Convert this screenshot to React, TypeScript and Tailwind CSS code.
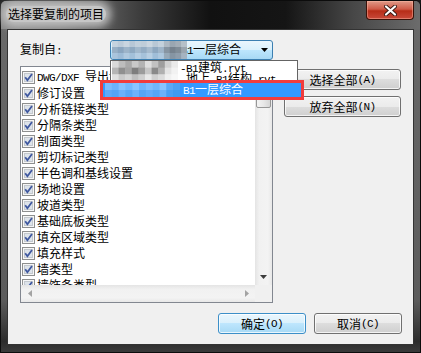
import React from "react";

const items = [
  "DWG/DXF 导出设置",
  "修订设置",
  "分析链接类型",
  "分隔条类型",
  "剖面类型",
  "剪切标记类型",
  "半色调和基线设置",
  "场地设置",
  "坡道类型",
  "基础底板类型",
  "填充区域类型",
  "填充样式",
  "墙类型",
  "墙饰条类型",
];

// pixelated (blurred-out) parts of the file names
const comboBlur = [
  ["#c5d3df", "#bccbd9", "#c9d5e0", "#b7c7d6", "#c2d0dc", "#bfcdd9", "#cbd6e0", "#b9c8d5", "#c4d1dc", "#aeb9c3", "#9aa6b1", "#a3adb6", "#b6c0c8"],
  ["#98b0c6", "#8aa5bf", "#9db4c9", "#8fa9c1", "#a2b8cc", "#94adc4", "#a6bbce", "#8ea8c0", "#9fb5c9", "#8795a2", "#76828e", "#808c97", "#9aa5af"],
  ["#a9c4dc", "#9dbbd6", "#b0c9df", "#a3c0d9", "#b5cde2", "#a6c2da", "#b8cfe3", "#a0bed8", "#aec8de", "#97a9b8", "#8695a3", "#8f9dab", "#a5b3c0"],
];
const listBlur = [
  ["#d9d9d9", "#bdbdbd", "#a9a9a9", "#c8c8c8", "#b3b3b3", "#dedede", "#c1c1c1", "#9e9e9e", "#d2d2d2", "#eaeaea"],
  ["#b5b5b5", "#8f8f8f", "#a3a3a3", "#7e7e7e", "#9b9b9b", "#c6c6c6", "#8a8a8a", "#b0b0b0", "#e4e4e4", "#f2f2f2"],
  ["#e0e0e0", "#c9c9c9", "#d4d4d4", "#bfbfbf", "#cfcfcf", "#e8e8e8", "#d0d0d0", "#dcdcdc", "#f0f0f0", "#f7f7f7"],
];
const selBlur = [
  ["#7cbcfd", "#6db3fb", "#86c2ff", "#74b8fc", "#8ac4ff", "#6fb5fb", "#80bffe", "#72b7fc", "#88c3ff", "#5da9f6", "#4ea1f3"],
  ["#5ea9f6", "#54a4f5", "#69b0fa", "#58a6f5", "#6cb2fb", "#57a5f4", "#62abf8", "#55a5f5", "#6bb1fa", "#4a9ff3", "#409af1"],
];

function Mosaic({ w, h, grid }: { w: number; h: number; grid: string[][] }) {
  const cw = w / grid[0].length;
  const ch = h / grid.length;
  return (
    <svg width={w} height={h} className="blur-[0.4px]">
      {grid.map((row, r) =>
        row.map((c, i) => <rect key={r + "-" + i} x={i * cw} y={r * ch} width={cw + 0.5} height={ch + 0.5} fill={c} />)
      )}
    </svg>
  );
}

// latin runs in a narrow mono face, CJK in Noto
function Txt({ s }: { s: string }) {
  const parts = s.split(/([\x20-\x7e]+)/);
  return (
    <>
      {parts.map((p, i) =>
        !p ? null : /[\x20-\x7e]/.test(p) ? (
          <span key={i} className="font-['Liberation_Mono',monospace] text-[11px] tracking-[-0.6px]">
            {p}
          </span>
        ) : (
          <span key={i}>{p}</span>
        )
      )}
    </>
  );
}

function CheckBox() {
  return (
    <svg width="13" height="13" viewBox="0 0 13 13" className="shrink-0">
      <rect x="0.5" y="0.5" width="12" height="12" fill="#f6f6f6" stroke="#8e8f8f" />
      <rect x="2.5" y="2.5" width="8" height="8" fill="#dde3ea" stroke="#c3c8ce" />
      <path d="M3.2 6.2 L5.4 9.2 L10 3" fill="none" stroke="#3f58a0" strokeWidth="1.8" />
    </svg>
  );
}

function Arrow({ dir, color }: { dir: "down" | "left" | "right"; color: string }) {
  if (dir === "down")
    return (
      <svg width="7" height="4" viewBox="0 0 7 4">
        <path d="M0 0 H7 L3.5 4 Z" fill={color} />
      </svg>
    );
  return (
    <svg width="4" height="7" viewBox="0 0 4 7">
      <path d={dir === "left" ? "M4 0 V7 L0 3.5 Z" : "M0 0 V7 L4 3.5 Z"} fill={color} />
    </svg>
  );
}

function WinButton({ label, w, isDefault }: { label: string; w: string; isDefault?: boolean }) {
  return (
    <div
      className={`flex h-[21px] ${w} items-center justify-center rounded-[3px] border shadow-[inset_0_0_0_1px_rgba(255,255,255,0.75)] ${
        isDefault
          ? "border-[#3c8fc8] bg-[linear-gradient(to_bottom,#eaf6fd_0%,#d9f0fc_50%,#bee6fd_50%,#a7d9f5_100%)]"
          : "border-[#707070] bg-[linear-gradient(to_bottom,#f2f2f2_0%,#ebebeb_50%,#dddddd_50%,#cfcfcf_100%)]"
      }`}
    >
      <Txt s={label} />
    </div>
  );
}

function VScroll() {
  return (
    <div className="flex w-[17px] flex-col bg-[linear-gradient(to_right,#e4e4e4,#f1f1f1_25%,#f3f3f3_75%,#e8e8e8)]">
      <div className="flex h-[17px] items-center justify-center" />
      <div className="mx-[1px] h-[24px] rounded-[2px] border border-[#979797] bg-[linear-gradient(to_right,#f3f3f3,#e8e8e8_50%,#d6d6d6)]" />
      <div className="flex-1" />
      <div className="flex h-[17px] items-center justify-center">
        <Arrow dir="down" color="#3c3c3c" />
      </div>
    </div>
  );
}

function HScroll() {
  return (
    <div className="flex flex-1 bg-[linear-gradient(to_bottom,#e4e4e4,#f1f1f1_25%,#f3f3f3_75%,#e8e8e8)]">
      <div className="flex w-[17px] items-center justify-center">
        <Arrow dir="left" color="#a3a3a3" />
      </div>
      <div className="flex-1" />
      <div className="flex w-[17px] items-center justify-center">
        <Arrow dir="right" color="#a3a3a3" />
      </div>
    </div>
  );
}

export default function App() {
  return (
    <div className="relative h-[353px] w-[421px] overflow-hidden bg-[#1a1a1a] font-['Noto_Sans_CJK_SC',sans-serif] text-[12px] leading-[14px] text-black">
      <div className="flex h-full flex-col rounded-t-[6px] border border-[#0c0c0c] bg-[linear-gradient(to_bottom,#6a6a6a_0%,#5c5c5c_85%,#2c2c2c_97%,#3a3a3a_100%)]">
        {/* title bar */}
        <div className="flex h-[28px] shrink-0 items-start justify-between rounded-t-[5px] bg-[linear-gradient(to_right,#8a8a8a_0%,#7c7c7c_14%,#3a3a3a_34%,#111111_50%,#151515_68%,#474747_84%,#6c6c6c_100%)]">
          <div className="ml-[5px] mt-[5px] rounded-[8px] bg-[#c6c6c6] px-[2px] leading-[16px] shadow-[0_0_8px_5px_rgba(198,198,198,0.9)]">
            选择要复制的项目
          </div>
          <div className="mr-[6px] flex h-[19px] w-[48px] items-center justify-center rounded-b-[4px] border border-t-0 border-[#3b1209] bg-[linear-gradient(to_bottom,#e09a88_0%,#cf5b48_45%,#b72d18_55%,#c8493a_100%)] shadow-[inset_0_0_0_1px_rgba(255,190,170,0.45)]">
            <svg width="13" height="11" viewBox="0 0 13 11">
              <path d="M2 1.5 L11 9.5 M11 1.5 L2 9.5" stroke="#3a1a14" strokeWidth="4" strokeLinecap="round" />
              <path d="M2 1.5 L11 9.5 M11 1.5 L2 9.5" stroke="#ffffff" strokeWidth="2.2" strokeLinecap="round" />
            </svg>
          </div>
        </div>

        {/* client area */}
        <div className="mx-[6px] mb-[7px] flex flex-1 flex-col border border-[#333333] bg-[#f0f0f0] pl-[12px] pr-[11px] pt-[10px]">
          <div className="flex h-[20px] items-center">
            <div className="w-[90px]">
              <Txt s="复制自:" />
            </div>
            <div className="relative flex h-[20px] w-[163px] items-center justify-between rounded-[3px] border border-[#3c7fb1] bg-[linear-gradient(to_bottom,#eaf6fd_0%,#d9f0fc_50%,#bee6fd_50%,#a7d9f5_100%)] pl-[70px] pr-[4px]">
              <span className="whitespace-nowrap">
                <Txt s="B1一层综合" />
              </span>
              <Arrow dir="down" color="#000000" />
              <div className="absolute left-[1px] top-[0px]">
                <Mosaic w={75} h={18} grid={comboBlur} />
              </div>
            </div>
          </div>

          <div className="mt-[6px] flex items-start">
            <div className="flex h-[237px] w-[253px] flex-col border border-[#828790] bg-white">
              <div className="flex min-h-0 flex-1">
                <div className="flex-1 overflow-hidden pl-[1px] pt-[2px]">
                  {items.map((s) => (
                    <div key={s} className="flex h-[16px] items-center gap-[2px] whitespace-nowrap">
                      <CheckBox />
                      <span>
                        <Txt s={s} />
                      </span>
                    </div>
                  ))}
                </div>
                <VScroll />
              </div>
              <div className="flex h-[17px]">
                <HScroll />
                <div className="w-[17px] bg-[#f0f0f0]" />
              </div>
            </div>
            <div className="ml-[11px] mt-[3px] flex flex-col gap-[6px]">
              <WinButton label="选择全部(A)" w="w-[117px]" />
              <WinButton label="放弃全部(N)" w="w-[117px]" />
            </div>
          </div>

          <div className="mt-[10px] flex justify-end gap-[8px]">
            <WinButton label="确定(O)" w="w-[88px]" isDefault />
            <WinButton label="取消(C)" w="w-[88px]" />
          </div>
        </div>
      </div>

      {/* open combo dropdown */}
      <div className="absolute left-[110px] top-[60px] h-[40px] w-[188px] border border-[#646464] bg-white">
        <div className="relative h-full pl-[69px]">
          <div className="h-[11px] whitespace-nowrap leading-[11px]">
            <Txt s="-B1建筑.rvt" />
          </div>
          <div className="h-[11px] whitespace-nowrap leading-[11px]">
            <Txt s="-地上-B1结构.rvt" />
          </div>
          <div className="absolute left-[1px] top-0">
            <Mosaic w={66} h={20} grid={listBlur} />
          </div>
        </div>
      </div>

      {/* highlighted item with red marker */}
      <div className="absolute left-[100px] top-[80px] flex h-[20px] w-[204px] items-center border-[3px] border-[#f23c3c] bg-[#3399ff] pl-[80px] text-white">
        <span className="whitespace-nowrap leading-[14px]">
          <Txt s="B1一层综合" />
        </span>
        <div className="absolute left-[2px] top-0">
          <Mosaic w={75} h={14} grid={selBlur} />
        </div>
      </div>
    </div>
  );
}
